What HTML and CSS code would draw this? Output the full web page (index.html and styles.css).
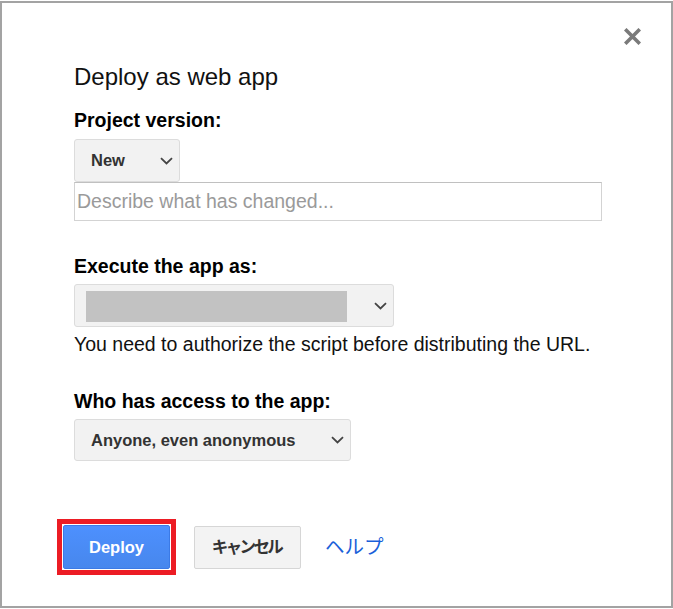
FILE: index.html
```html
<!DOCTYPE html>
<html lang="en">
<head>
<meta charset="utf-8">
<title>Deploy as web app</title>
<link rel="stylesheet" href="styles.css">
</head>
<body>
<div class="dialog">
  <button class="close" aria-label="Close">
    <svg width="17" height="17" viewBox="0 0 17 17"><path d="M2.5 2.5 L14.5 14.5 M14.5 2.5 L2.5 14.5" stroke="#7a7a7a" stroke-width="3.6" stroke-linecap="square"/></svg>
  </button>
  <h1 class="title">Deploy as web app</h1>

  <div class="label first">Project version:</div>
  <div class="select select-new">
    <span class="select-text">New</span>
    <svg class="chev" width="13" height="8" viewBox="0 0 13 8"><path d="M1 1.2 L6.5 6.4 L12 1.2" fill="none" stroke="#444" stroke-width="1.8"/></svg>
  </div>
  <div class="input">Describe what has changed...</div>

  <div class="label section">Execute the app as:</div>
  <div class="select select-exec">
    <span class="redacted"></span>
    <svg class="chev" width="13" height="8" viewBox="0 0 13 8"><path d="M1 1.2 L6.5 6.4 L12 1.2" fill="none" stroke="#444" stroke-width="1.8"/></svg>
  </div>
  <p class="note">You need to authorize the script before distributing the URL.</p>

  <div class="label section">Who has access to the app:</div>
  <div class="select select-access">
    <span class="select-text">Anyone, even anonymous</span>
    <svg class="chev" width="13" height="8" viewBox="0 0 13 8"><path d="M1 1.2 L6.5 6.4 L12 1.2" fill="none" stroke="#444" stroke-width="1.8"/></svg>
  </div>

  <div class="actions">
    <span class="highlight"><button class="btn btn-primary">Deploy</button></span>
    <button class="btn btn-default">キャンセル</button>
    <a class="help" href="#">ヘルプ</a>
  </div>
</div>
</body>
</html>
```

FILE: styles.css
```css
html, body {
  margin: 0;
  padding: 0;
  background: #ffffff;
}

body {
  font-family: "Liberation Sans", Arial, "Noto Sans CJK JP", sans-serif;
  color: #000;
}

.dialog {
  position: relative;
  box-sizing: border-box;
  width: 673px;
  height: 607px;
  margin-top: 1px;
  border: 2px solid #a3a3a3;
  padding: 60px 0 0 72px;
  display: flex;
  flex-direction: column;
  align-items: flex-start;
  background: #fff;
}

.close {
  position: absolute;
  top: 25px;
  right: 30px;
  width: 17px;
  height: 17px;
  padding: 0;
  border: 0;
  background: transparent;
  display: block;
}

.close svg {
  display: block;
}

.title {
  margin: 0;
  font-size: 24px;
  line-height: 28px;
  font-weight: normal;
  color: #111;
}

.label {
  font-size: 19.5px;
  line-height: 23px;
  font-weight: bold;
  color: #000;
}

.label.first {
  margin-top: 18px;
}

.label.section {
  margin-top: 34px;
}

.select {
  box-sizing: border-box;
  margin-top: 7px;
  height: 43px;
  display: flex;
  align-items: center;
  justify-content: space-between;
  background: #f2f2f2;
  border: 1px solid #dcdcdc;
  border-radius: 3px;
  padding: 0 6px 0 16px;
}

.select-text {
  font-size: 16.5px;
  line-height: 20px;
  font-weight: bold;
  color: #333;
  margin-top: -2px;
}

.chev {
  display: block;
  flex: none;
}

.select-new {
  width: 106px;
}

.select-exec {
  width: 320px;
  margin-top: 6px;
  padding-left: 11px;
}

.redacted {
  display: block;
  width: 261px;
  height: 31px;
  background: #c2c2c2;
  margin-top: 1px;
}

.select-access {
  width: 277px;
  height: 42px;
  margin-top: 6px;
}

.select-access .select-text {
  margin-top: 0;
}

.input {
  box-sizing: border-box;
  width: 528px;
  height: 39px;
  border: 1px solid #d3d3d3;
  border-top-color: #c0c0c0;
  padding: 0 2px;
  font-size: 19.5px;
  line-height: 36px;
  color: #9a9a9a;
}

.note {
  margin: 6px 0 0;
  font-size: 19.5px;
  line-height: 23px;
  color: #111;
}

.actions {
  margin-top: 58px;
  margin-left: -17px;
  display: flex;
  align-items: center;
}

.highlight {
  display: block;
  border: 5px solid #ec1c24;
  padding: 1px;
  background: #fff;
}

.btn {
  box-sizing: border-box;
  height: 44px;
  width: 107px;
  font-family: "Liberation Sans", Arial, "Noto Sans CJK JP", sans-serif;
  font-size: 16.5px;
  line-height: 20px;
  font-weight: bold;
  border-radius: 2px;
  padding: 0;
  display: block;
}

.btn-primary {
  color: #fff;
  background: linear-gradient(#4d90fe, #4787ed);
  border: 1px solid #3b7ae6;
}

.btn-default {
  margin-left: 18px;
  height: 43px;
  color: #333;
  background: #f3f3f3;
  border: 1px solid #d6d6d6;
  letter-spacing: -2.6px;
  text-indent: -2px;
}

.help {
  margin-left: 24px;
  margin-top: -3px;
  font-size: 19.5px;
  line-height: 24px;
  color: #1a5fd9;
  text-decoration: none;
  font-family: "Noto Sans CJK JP", sans-serif;
}
```
